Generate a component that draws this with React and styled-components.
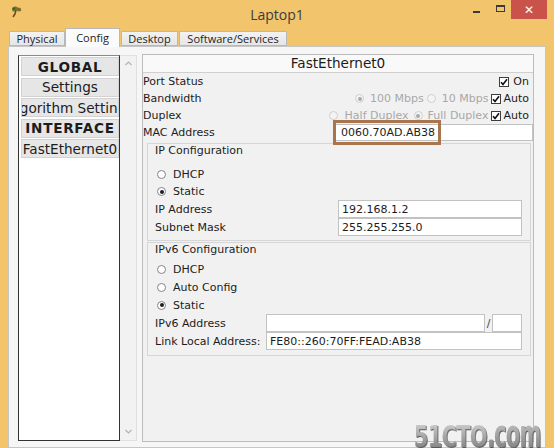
import React from 'react';
import styled, { createGlobalStyle } from 'styled-components';

const Global = createGlobalStyle`
  html, body { margin: 0; padding: 0; width: 554px; height: 448px; overflow: hidden; background: #f2c56c; }
  * { box-sizing: border-box; }
`;

const Window = styled.div`
  position: relative;
  width: 554px;
  height: 448px;
  background: #f2c56c;
  display: flex;
  flex-direction: column;
  overflow: hidden;
  font-family: "DejaVu Sans", Verdana, sans-serif;
`;

const TitleBar = styled.div`
  flex-shrink: 0;
  height: 26px;
  display: grid;
  grid-template-columns: 1fr auto 1fr;
  align-items: start;
`;

const AppIcon = styled.div`
  padding: 5px 0 0 10px;
  display: flex;
`;

const Title = styled.div`
  font-family: "Open Sans", "Noto Sans", sans-serif;
  font-size: 14px;
  color: #3b3b3b;
  line-height: 29px;
`;

const Controls = styled.div`
  display: flex;
  justify-content: flex-end;
  align-items: flex-start;
  padding-right: 7px;
`;

const CtrlBtn = styled.div`
  width: ${p => p.$w}px;
  height: 19px;
  display: flex;
  align-items: center;
  justify-content: center;
  background: ${p => (p.$close ? '#c9524b' : 'transparent')};
  color: #fff;
  font-family: "DejaVu Sans", sans-serif;
  font-size: 12px;
  font-weight: bold;
`;

const MinGlyph = styled.div`
  width: 7px;
  height: 2px;
  background: #3a3a3a;
  margin-top: 5px;
`;

const MaxGlyph = styled.div`
  width: 9px;
  height: 7px;
  border: 1px solid #3a3a3a;
  border-top-width: 2px;
  margin-bottom: 2px;
`;

const Body = styled.div`
  flex: 1;
  min-height: 0;
  display: flex;
  flex-direction: column;
  padding: 0 8px;
`;

const TabStrip = styled.div`
  flex-shrink: 0;
  display: flex;
  align-items: flex-end;
  height: 20px;
  padding-left: 1px;
  position: relative;
  z-index: 1;
`;

const Tab = styled.div`
  width: ${p => p.$w}px;
  height: ${p => (p.$active ? 19 : 15)}px;
  margin-bottom: ${p => (p.$active ? -1 : 0)}px;
  margin-left: ${p => p.$ml || 0}px;
  display: flex;
  align-items: center;
  justify-content: center;
  font-family: "Open Sans", "Noto Sans", sans-serif;
  font-size: 11px;
  color: #1e1e1e;
  background: ${p => (p.$active ? '#fbfbfb' : 'linear-gradient(#f2f2f2, #e6e6e6)')};
  border: 1px solid #b8b8b8;
  border-bottom: ${p => (p.$active ? 'none' : '1px solid #b8b8b8')};
  padding-bottom: ${p => (p.$active ? 2 : 0)}px;
`;

const Pane = styled.div`
  flex: 1;
  display: flex;
  align-items: flex-start;
  border: 1px solid #c6c6c6;
  background: #f6f6f6;
  padding: 8px 11px 0 9px;
`;

const SideList = styled.div`
  width: 102px;
  height: 386px;
  background: #fff;
  border: 1px solid #333;
  border-top-color: #8a8a8a;
  padding: 1px 0 0 2px;
  display: flex;
  flex-direction: column;
  gap: 1.5px;
`;

const SideItem = styled.div`
  height: 19px;
  display: flex;
  align-items: center;
  justify-content: center;
  overflow: hidden;
  white-space: nowrap;
  background: #e6e6e6;
  border: 1px solid #d2d2d2;
  font-size: 13.6px;
  font-weight: ${p => (p.$bold ? 'bold' : 'normal')};
  letter-spacing: ${p => (p.$bold ? '0.7px' : '0')};
  color: #1c1c1c;
`;

const ScrollBar = styled.div`
  width: 17px;
  height: 386px;
  background: #f2f2f2;
  border: 1px solid #e0e0e0;
  border-left: none;
  display: flex;
  flex-direction: column;
  justify-content: space-between;
  align-items: center;
  padding: 5px 0 6px;
`;

const Panel = styled.div`
  flex: 1;
  height: 388px;
  margin: -1px 0 0 5px;
  border: 1px solid #bcbcbc;
  background: #f1f1f1;
  display: flex;
  flex-direction: column;
  font-size: 11px;
  color: #1c1c1c;
`;

const PanelHeader = styled.div`
  height: 18px;
  line-height: 17px;
  text-align: center;
  font-size: 13.6px;
  background: #f9f9f9;
  border-bottom: 1px solid #d0d0d0;
`;

const Row = styled.div`
  height: 17px;
  display: flex;
  align-items: center;
  justify-content: space-between;
  padding: 0 ${p => (p.$pr ?? 4)}px 0 0;
  white-space: nowrap;
`;

const Opts = styled.div`
  display: flex;
  align-items: center;
`;

const OptText = styled.span`
  color: ${p => (p.$dim ? '#a8a8a8' : '#1c1c1c')};
  margin: 0 ${p => p.$mr ?? 3}px 0 ${p => p.$ml ?? 6}px;
`;

const RadioDot = styled.span`
  width: 9px;
  height: 9px;
  border-radius: 50%;
  flex-shrink: 0;
  border: 1px solid ${p => (p.$dim ? '#cfcfcf' : '#858585')};
  background: ${p => (p.$dim ? '#f4f4f4' : '#fff')};
  display: flex;
  align-items: center;
  justify-content: center;
  &::after {
    content: '';
    width: 4px;
    height: 4px;
    border-radius: 50%;
    background: ${p => (p.$on ? (p.$dim ? '#a9a9a9' : '#1e1e1e') : 'transparent')};
  }
`;

const CheckBox = styled.span`
  width: 10px;
  height: 10px;
  flex-shrink: 0;
  border: 1px solid #3e3e3e;
  background: #fff;
  display: flex;
  align-items: center;
  justify-content: center;
`;

const MacWrap = styled.div`
  position: relative;
  width: 199px;
  height: 17px;
`;

const TextBox = styled.div`
  height: ${p => p.$h || 18}px;
  width: ${p => (p.$w ? `${p.$w}px` : 'auto')};
  flex: ${p => (p.$w ? '0 0 auto' : '1')};
  background: #fff;
  border: 1px solid #c2c2c2;
  padding-left: ${p => p.$pl ?? 3}px;
  display: flex;
  align-items: center;
  font-size: 11px;
  color: #1c1c1c;
  white-space: nowrap;
`;

const Highlight = styled.div`
  position: absolute;
  left: -1px;
  top: -4px;
  width: 108px;
  height: 25px;
  border: 3px solid #a9754f;
  pointer-events: none;
`;

const Group = styled.div`
  margin: ${p => p.$mt ?? 0}px 2px 0 4px;
  border: 1px solid #d6d6d6;
  padding: 0 8px ${p => p.$pb}px 7px;
  display: flex;
  flex-direction: column;
`;

const GroupTitle = styled.div`
  height: 14px;
  line-height: 13px;
  margin-bottom: ${p => p.$mb}px;
`;

const RadioRow = styled.div`
  height: ${p => p.$h}px;
  display: flex;
  align-items: center;
  padding-left: 2px;
`;

const FieldRow = styled.div`
  height: 18px;
  display: flex;
  align-items: stretch;
`;

const FieldLabel = styled.div`
  width: ${p => p.$w}px;
  flex-shrink: 0;
  display: flex;
  align-items: center;
  white-space: nowrap;
`;

const Slash = styled.div`
  width: 7px;
  display: flex;
  align-items: center;
  justify-content: center;
  color: #444;
`;

const Watermark = styled.div`
  position: absolute;
  right: 13px;
  bottom: -4px;
  display: flex;
  align-items: baseline;
  font-family: "DejaVu Sans Condensed", "DejaVu Sans", sans-serif;
  font-weight: bold;
  font-size: 30px;
  line-height: 30px;
  letter-spacing: -1px;
  transform: scaleX(0.78);
  transform-origin: right bottom;
  filter: drop-shadow(1px 1px 0 #5a5a5a);
`;

const MarkPart = styled.span`
  display: inline-block;
  color: #999;
  background: linear-gradient(#d0d0d0, #7a7a7a);
  -webkit-background-clip: text;
  background-clip: text;
  -webkit-text-fill-color: transparent;
  transform: scaleY(${p => p.$sy || 1});
  transform-origin: 50% 85%;
`;

const Check = () => (
  <svg width="8" height="8" viewBox="0 0 8 8">
    <path d="M1 4.2 L3 6.4 L7 1.2" fill="none" stroke="#111" strokeWidth="1.6" />
  </svg>
);

const Chevron = ({ up }) => (
  <svg width="7" height="5" viewBox="0 0 7 5">
    <path d={up ? 'M0.5 4 L3.5 1 L6.5 4' : 'M0.5 1 L3.5 4 L6.5 1'} fill="none" stroke="#b3b3b3" strokeWidth="1.2" />
  </svg>
);

const PlantIcon = () => (
  <svg width="13" height="14" viewBox="0 0 13 14">
    <path d="M2 3 C4 1 7 1 8 3 C10 2 12 4 11 6 C9 7 7 6 6 5 C5 7 3 7 2 5 Z" fill="#6d7a2e" />
    <path d="M6 5 L5 9 L3 12" fill="none" stroke="#6a4a22" strokeWidth="1.6" />
    <circle cx="9" cy="4" r="1.3" fill="#a0553a" />
    <circle cx="4" cy="3.5" r="1" fill="#3f4f20" />
  </svg>
);

export default function App() {
  return (
    <>
      <Global />
      <Window>
        <TitleBar>
          <AppIcon><PlantIcon /></AppIcon>
          <Title>Laptop1</Title>
          <Controls>
            <CtrlBtn $w={26}><MinGlyph /></CtrlBtn>
            <CtrlBtn $w={22}><MaxGlyph /></CtrlBtn>
            <CtrlBtn $w={36} $close>✕</CtrlBtn>
          </Controls>
        </TitleBar>
        <Body>
          <TabStrip>
            <Tab $w={56}>Physical</Tab>
            <Tab $w={55} $active>Config</Tab>
            <Tab $w={57} $ml={1}>Desktop</Tab>
            <Tab $w={108} $ml={1}>Software/Services</Tab>
          </TabStrip>
          <Pane>
            <SideList>
              <SideItem $bold>GLOBAL</SideItem>
              <SideItem>Settings</SideItem>
              <SideItem>Algorithm Settings</SideItem>
              <SideItem $bold>INTERFACE</SideItem>
              <SideItem>FastEthernet0</SideItem>
            </SideList>
            <ScrollBar>
              <Chevron up />
              <Chevron />
            </ScrollBar>
            <Panel>
              <PanelHeader>FastEthernet0</PanelHeader>
              <Row>
                <span>Port Status</span>
                <Opts>
                  <CheckBox><Check /></CheckBox>
                  <OptText $mr={0} $ml={4}>On</OptText>
                </Opts>
              </Row>
              <Row>
                <span>Bandwidth</span>
                <Opts>
                  <RadioDot $dim $on />
                  <OptText $dim>100 Mbps</OptText>
                  <RadioDot $dim />
                  <OptText $dim>10 Mbps</OptText>
                  <CheckBox><Check /></CheckBox>
                  <OptText $mr={0} $ml={2}>Auto</OptText>
                </Opts>
              </Row>
              <Row>
                <span>Duplex</span>
                <Opts>
                  <RadioDot $dim />
                  <OptText $dim $ml={7} $mr={5}>Half Duplex</OptText>
                  <RadioDot $dim $on />
                  <OptText $dim $ml={5}>Full Duplex</OptText>
                  <CheckBox><Check /></CheckBox>
                  <OptText $mr={0} $ml={2}>Auto</OptText>
                </Opts>
              </Row>
              <Row $pr={0}>
                <span>MAC Address</span>
                <MacWrap>
                  <TextBox $h={17} $pl={6}>0060.70AD.AB38</TextBox>
                  <Highlight />
                </MacWrap>
              </Row>

              <Group $mt={2} $pb={4}>
                <GroupTitle $mb={8}>IP Configuration</GroupTitle>
                <RadioRow $h={17}><RadioDot /><OptText $ml={7}>DHCP</OptText></RadioRow>
                <RadioRow $h={17}><RadioDot $on /><OptText $ml={7}>Static</OptText></RadioRow>
                <FieldRow>
                  <FieldLabel $w={183}>IP Address</FieldLabel>
                  <TextBox>192.168.1.2</TextBox>
                </FieldRow>
                <FieldRow>
                  <FieldLabel $w={183}>Subnet Mask</FieldLabel>
                  <TextBox>255.255.255.0</TextBox>
                </FieldRow>
              </Group>

              <Group $mt={1} $pb={5}>
                <GroupTitle $mb={3}>IPv6 Configuration</GroupTitle>
                <RadioRow $h={18}><RadioDot /><OptText $ml={7}>DHCP</OptText></RadioRow>
                <RadioRow $h={18}><RadioDot /><OptText $ml={7}>Auto Config</OptText></RadioRow>
                <RadioRow $h={18}><RadioDot $on /><OptText $ml={7}>Static</OptText></RadioRow>
                <FieldRow>
                  <FieldLabel $w={111}>IPv6 Address</FieldLabel>
                  <TextBox />
                  <Slash>/</Slash>
                  <TextBox $w={30} />
                </FieldRow>
                <FieldRow>
                  <FieldLabel $w={111}>Link Local Address:</FieldLabel>
                  <TextBox>FE80::260:70FF:FEAD:AB38</TextBox>
                </FieldRow>
              </Group>
            </Panel>
          </Pane>
        </Body>
        <Watermark>
          <MarkPart>51CTO</MarkPart>
          <MarkPart $sy={1.3}>.com</MarkPart>
        </Watermark>
      </Window>
    </>
  );
}
